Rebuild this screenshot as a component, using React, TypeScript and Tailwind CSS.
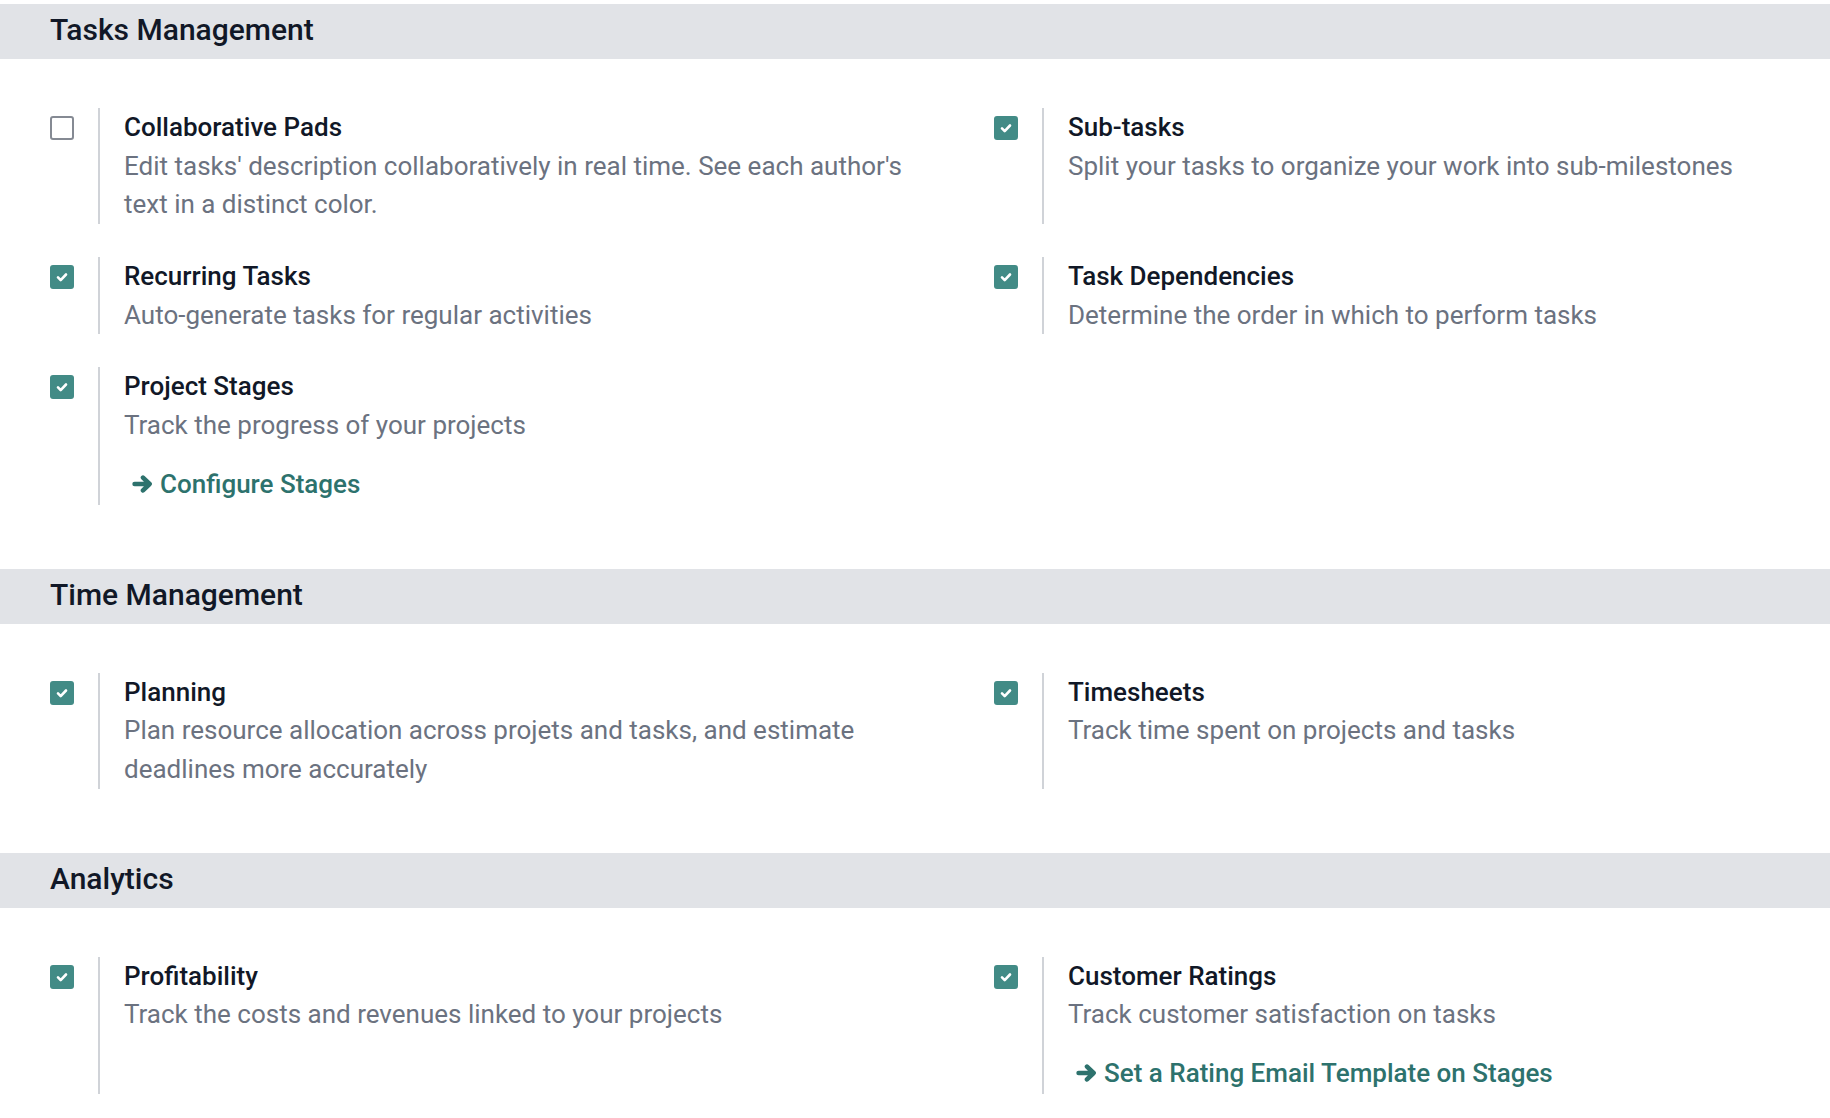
import React from 'react';

interface Setting {
    title: string;
    description: string;
    checked: boolean;
    link?: string;
}

interface Section {
    name: string;
    settings: Setting[];
}

const SECTIONS: Section[] = [
    {
        name: 'Tasks Management',
        settings: [
            {
                title: 'Collaborative Pads',
                description: "Edit tasks' description collaboratively in real time. See each author's text in a distinct color.",
                checked: false,
            },
            {
                title: 'Sub-tasks',
                description: 'Split your tasks to organize your work into sub-milestones',
                checked: true,
            },
            {
                title: 'Recurring Tasks',
                description: 'Auto-generate tasks for regular activities',
                checked: true,
            },
            {
                title: 'Task Dependencies',
                description: 'Determine the order in which to perform tasks',
                checked: true,
            },
            {
                title: 'Project Stages',
                description: 'Track the progress of your projects',
                checked: true,
                link: 'Configure Stages',
            },
        ],
    },
    {
        name: 'Time Management',
        settings: [
            {
                title: 'Planning',
                description: 'Plan resource allocation across projets and tasks, and estimate deadlines more accurately',
                checked: true,
            },
            {
                title: 'Timesheets',
                description: 'Track time spent on projects and tasks',
                checked: true,
            },
        ],
    },
    {
        name: 'Analytics',
        settings: [
            {
                title: 'Profitability',
                description: 'Track the costs and revenues linked to your projects',
                checked: true,
            },
            {
                title: 'Customer Ratings',
                description: 'Track customer satisfaction on tasks',
                checked: true,
                link: 'Set a Rating Email Template on Stages',
            },
        ],
    },
];

const Checkbox = ({ checked }: { checked: boolean }) => {
    if (!checked) {
        return <div className="mt-[8px] w-[24px] h-[24px] shrink-0 rounded-[3px] border-2 border-[#858a93] bg-white"></div>;
    }
    return (
        <div className="mt-[8px] w-[24px] h-[24px] shrink-0 rounded-[3px] bg-[#428b86] flex items-center justify-center">
            <svg width="24" height="24" viewBox="0 0 24 24" fill="none">
                <path d="M8 12.4l2.7 2.7 5.3-5.6" stroke="white" strokeWidth="2.6" strokeLinecap="round" strokeLinejoin="round" />
            </svg>
        </div>
    );
};

// thick arrow like the fa-arrow-right used on setting links
const ArrowRight = () => (
    <svg width="21" height="18" viewBox="0 0 21 18" fill="none" className="shrink-0">
        <path d="M2.6 9H16.5M11 2.6L17.6 9 11 15.4" stroke="currentColor" strokeWidth="4.6" strokeLinecap="round" strokeLinejoin="round" />
    </svg>
);

const SettingBox = ({ setting }: { setting: Setting }) => (
    <div className="flex pl-[50px] pr-[20px]">
        <Checkbox checked={setting.checked} />
        <div className="ml-[24px] border-l-2 border-[#d0d3d8] pl-[24px]">
            <div className="text-[26px] leading-[38.5px] font-medium text-[#111827]">{setting.title}</div>
            <div className="text-[26px] leading-[38.75px] text-[#6b7280]">{setting.description}</div>
            {setting.link && (
                <a className="mt-[19px] ml-[8px] flex items-center gap-[7px] text-[26px] leading-[41px] font-medium text-[#2d726d]">
                    <ArrowRight />
                    <span>{setting.link}</span>
                </a>
            )}
        </div>
    </div>
);

export default function App() {
    return (
        <div className="min-h-screen bg-white pt-[4px] font-['Roboto','Liberation_Sans',sans-serif]">
            {SECTIONS.map(section => (
                <div key={section.name}>
                    {/* Section header band */}
                    <h2 className="h-[55px] bg-[#e1e3e7] pl-[50px] text-[30px] leading-[52px] font-medium text-[#111827]">
                        {section.name}
                    </h2>
                    <div className="grid grid-cols-[944px_1fr] gap-y-[33px] pt-[49px] pb-[64px]">
                        {section.settings.map(setting => (
                            <SettingBox key={setting.title} setting={setting} />
                        ))}
                    </div>
                </div>
            ))}
        </div>
    );
}
